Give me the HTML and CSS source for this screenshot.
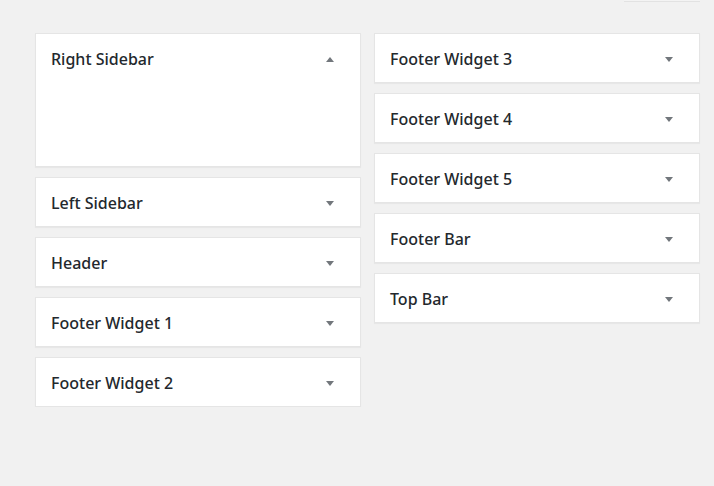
FILE: index.html
```html
<!DOCTYPE html>
<html>
<head>
<meta charset="utf-8">
<link rel="stylesheet" href="styles.css">
</head>
<body>
<div class="topbar"><div class="btn-edge"></div></div>
<div class="areas">
  <div class="col">
    <div class="card open">
      <div class="card-head"><h2>Right Sidebar</h2><span class="arrow up"></span></div>
      <div class="card-body"></div>
    </div>
    <div class="card"><div class="card-head"><h2>Left Sidebar</h2><span class="arrow"></span></div></div>
    <div class="card"><div class="card-head"><h2>Header</h2><span class="arrow"></span></div></div>
    <div class="card"><div class="card-head"><h2>Footer Widget 1</h2><span class="arrow"></span></div></div>
    <div class="card"><div class="card-head"><h2>Footer Widget 2</h2><span class="arrow"></span></div></div>
  </div>
  <div class="col">
    <div class="card"><div class="card-head"><h2>Footer Widget 3</h2><span class="arrow"></span></div></div>
    <div class="card"><div class="card-head"><h2>Footer Widget 4</h2><span class="arrow"></span></div></div>
    <div class="card"><div class="card-head"><h2>Footer Widget 5</h2><span class="arrow"></span></div></div>
    <div class="card"><div class="card-head"><h2>Footer Bar</h2><span class="arrow"></span></div></div>
    <div class="card"><div class="card-head"><h2>Top Bar</h2><span class="arrow"></span></div></div>
  </div>
</div>
</body>
</html>
```
FILE: styles.css
```css
html, body {
  margin: 0;
  padding: 0;
  background: #f1f1f1;
  font-family: "Noto Sans", "Open Sans", sans-serif;
  color: #23282d;
}
.topbar {
  height: 2px;
  display: flex;
  justify-content: flex-end;
  padding-right: 14px;
}
.btn-edge {
  width: 76px;
  height: 1px;
  border-bottom: 1px solid #e2e2e2;
  background: #f3f3f3;
}
.areas {
  display: flex;
  gap: 13px;
  padding: 31px 0 0 35px;
}
.col {
  width: 326px;
  display: flex;
  flex-direction: column;
  gap: 10px;
}
.card {
  background: #fff;
  border: 1px solid #e5e5e5;
  box-shadow: 0 1px 1px rgba(0,0,0,0.04);
}
.card-head {
  height: 48px;
  display: flex;
  align-items: center;
  justify-content: space-between;
  padding: 0 26px 0 15px;
}
.card-head h2 {
  margin: 0;
  font-size: 16px;
  font-weight: 500;
  line-height: 1;
  position: relative;
  top: 1px;
}
.card-body {
  height: 84px;
}
.arrow {
  width: 0;
  height: 0;
  border-left: 4px solid transparent;
  border-right: 4px solid transparent;
  border-top: 5px solid #72777c;
  position: relative;
  top: 1px;
}
.arrow.up {
  border-top: 0;
  border-bottom: 5px solid #72777c;
}
```
